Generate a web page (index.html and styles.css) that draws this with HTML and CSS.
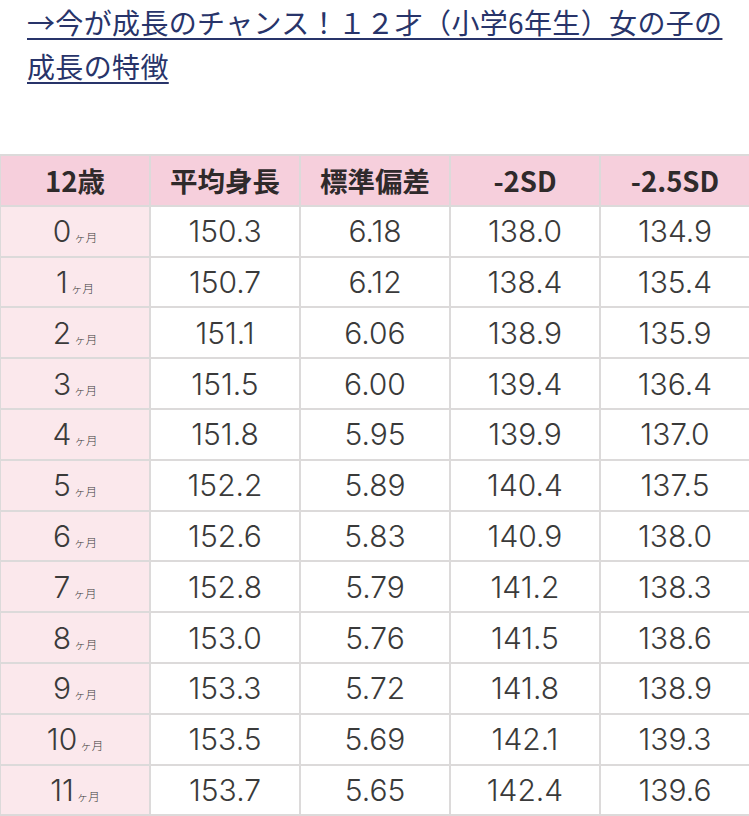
FILE: index.html
```html
<!DOCTYPE html>
<html lang="ja">
<head>
<meta charset="utf-8">
<link rel="stylesheet" href="styles.css">
</head>
<body>
<p class="lead"><a href="#">→今が成長のチャンス！１２才（小学6年生）女の子の成長の特徴</a></p>
<table class="growth">
<thead>
<tr><th>12歳</th><th>平均身長</th><th>標準偏差</th><th>-2SD</th><th>-2.5SD</th></tr>
</thead>
<tbody>
<tr><td class="m">0<small>ヶ月</small></td><td>150.3</td><td>6.18</td><td>138.0</td><td>134.9</td></tr>
<tr><td class="m">1<small>ヶ月</small></td><td>150.7</td><td>6.12</td><td>138.4</td><td>135.4</td></tr>
<tr><td class="m">2<small>ヶ月</small></td><td>151.1</td><td>6.06</td><td>138.9</td><td>135.9</td></tr>
<tr><td class="m">3<small>ヶ月</small></td><td>151.5</td><td>6.00</td><td>139.4</td><td>136.4</td></tr>
<tr><td class="m">4<small>ヶ月</small></td><td>151.8</td><td>5.95</td><td>139.9</td><td>137.0</td></tr>
<tr><td class="m">5<small>ヶ月</small></td><td>152.2</td><td>5.89</td><td>140.4</td><td>137.5</td></tr>
<tr><td class="m">6<small>ヶ月</small></td><td>152.6</td><td>5.83</td><td>140.9</td><td>138.0</td></tr>
<tr><td class="m">7<small>ヶ月</small></td><td>152.8</td><td>5.79</td><td>141.2</td><td>138.3</td></tr>
<tr><td class="m">8<small>ヶ月</small></td><td>153.0</td><td>5.76</td><td>141.5</td><td>138.6</td></tr>
<tr><td class="m">9<small>ヶ月</small></td><td>153.3</td><td>5.72</td><td>141.8</td><td>138.9</td></tr>
<tr><td class="m">10<small>ヶ月</small></td><td>153.5</td><td>5.69</td><td>142.1</td><td>139.3</td></tr>
<tr><td class="m">11<small>ヶ月</small></td><td>153.7</td><td>5.65</td><td>142.4</td><td>139.6</td></tr>
</tbody>
</table>
</body>
</html>
```
FILE: styles.css
```css
html, body {
  margin: 0;
  padding: 0;
  background: #fff;
}
body {
  font-family: "Noto Sans CJK JP", "Noto Sans", sans-serif;
  color: #333;
  overflow: hidden;
}
.lead {
  margin: 0 0 66px 0;
  padding: 0 20px 0 27px;
  font-size: 28px;
  line-height: 44px;
  letter-spacing: 0.35px;
}
.lead a {
  color: #28346a;
  text-decoration: underline;
  text-decoration-thickness: 2px;
  text-underline-offset: 4px;
}
.growth {
  border-collapse: collapse;
  table-layout: fixed;
  width: 752px;
  margin-left: -1px;
}
.growth th,
.growth td {
  border: 2px solid #dcdada;
  height: 48.8px;
  padding: 0;
  text-align: center;
  vertical-align: middle;
}
.growth th {
  background: #f6cfdc;
  font-size: 27.5px;
  font-weight: 700;
  color: #2f2a2b;
}
.growth td {
  font-family: "Inter", "Noto Sans CJK JP", sans-serif;
  font-size: 30px;
  font-weight: 300;
  color: #3a3a3a;
}
.growth td.m {
  background: #fbe8ec;
}
.growth td.m small {
  font-family: "Noto Sans CJK JP", sans-serif;
  font-size: 11.5px;
  margin-left: 3px;
}
```
